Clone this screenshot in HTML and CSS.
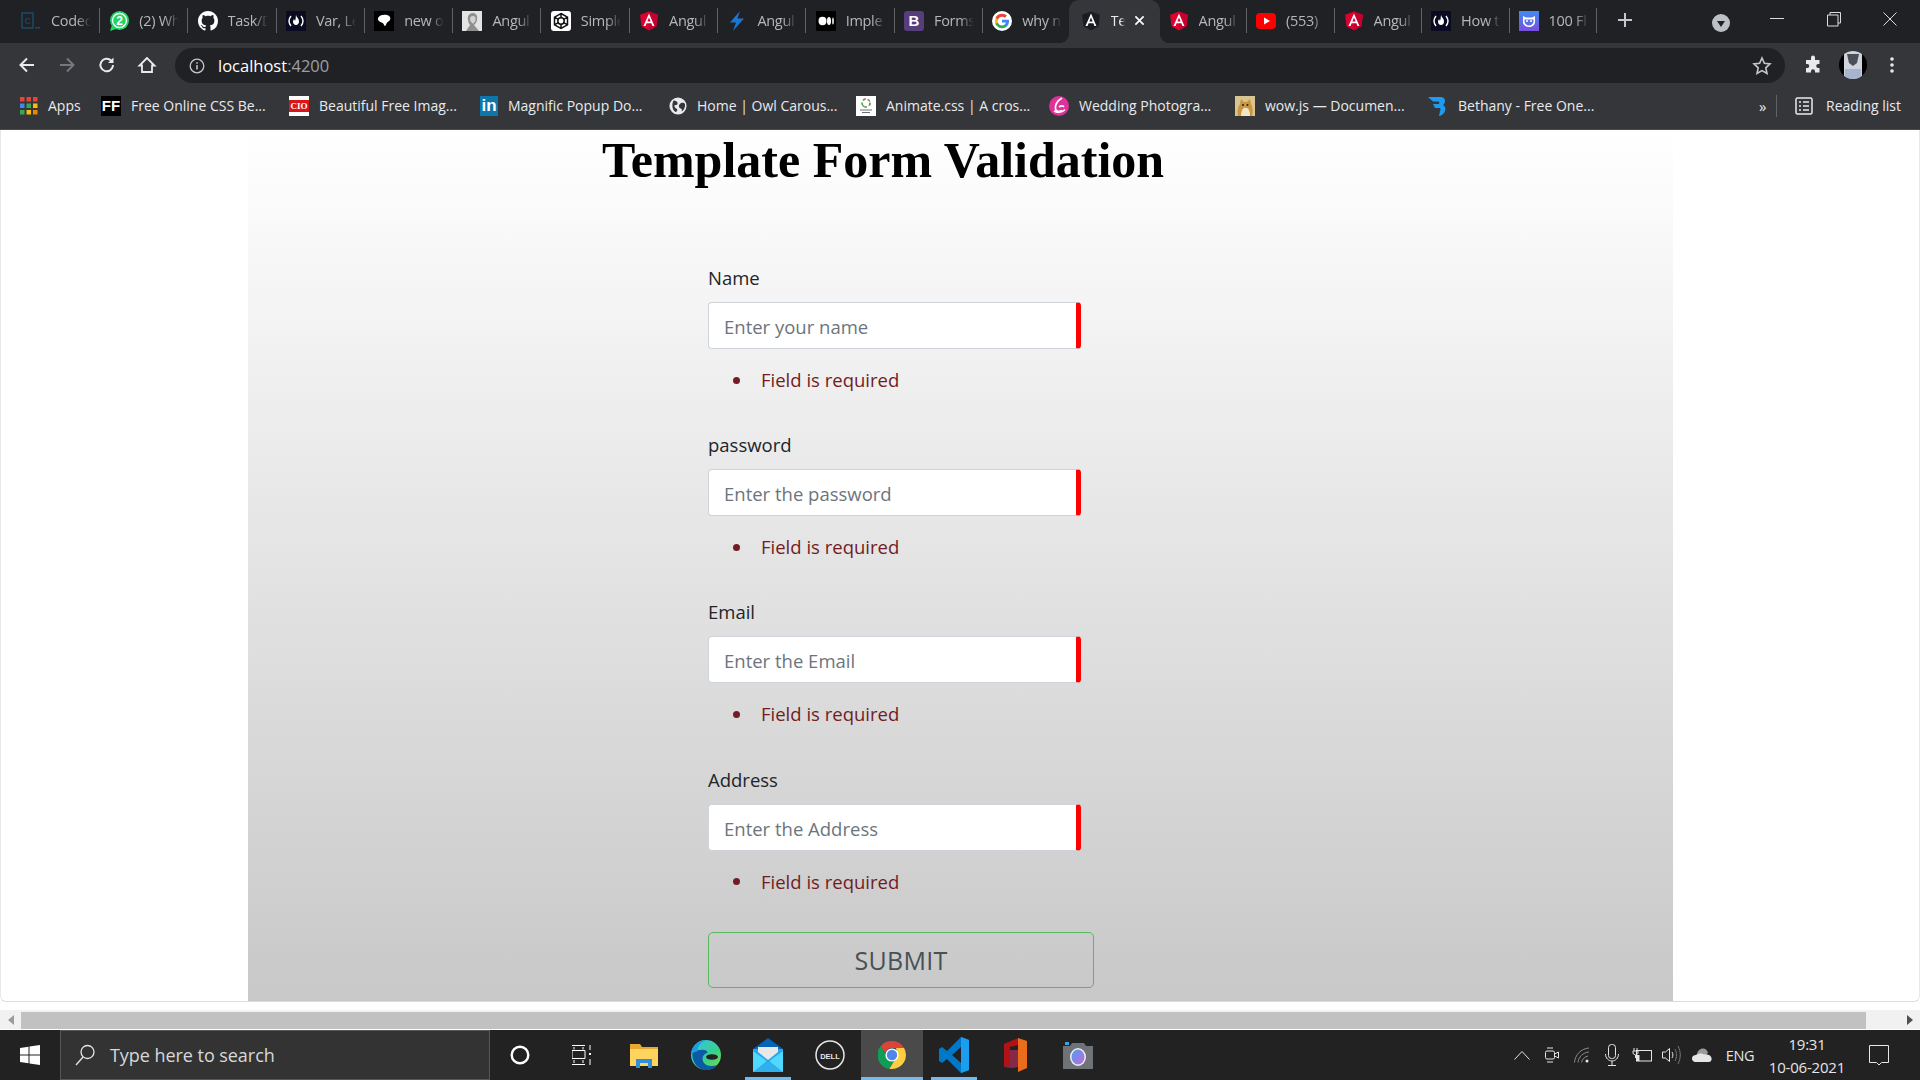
FILE: index.html
```html
<!DOCTYPE html>
<html lang="en">
<head>
<meta charset="utf-8">
<title>Template Form Validation</title>
<link rel="stylesheet" href="styles.css">
</head>
<body>
<svg class="defs" width="0" height="0" aria-hidden="true">
  <symbol id="ng-red" viewBox="20 25 210 210"><path fill="#DD0031" d="M125 30 31.9 63.2l14.2 123.1L125 230l78.9-43.7 14.2-123.1z"/><path fill="#C3002F" d="M125 30v200l78.9-43.7 14.2-123.1z"/><path fill="#fff" d="M125 52.1 66.8 182.6h21.7l11.7-29.2h49.4l11.7 29.2H182L125 52.1zm17 83.3h-34l17-40.9 17 40.9z"/></symbol>
  <symbol id="ng-dark" viewBox="20 25 210 210"><path fill="#1a1c24" d="M125 30 31.9 63.2l14.2 123.1L125 230l78.9-43.7 14.2-123.1z"/><path fill="#fff" d="M125 52.1 66.8 182.6h21.7l11.7-29.2h49.4l11.7 29.2H182L125 52.1zm17 83.3h-34l17-40.9 17 40.9z"/></symbol>
  <symbol id="fcc" viewBox="0 0 20 20"><rect width="20" height="20" fill="#0a0a23"/><path d="M5 5C2.6 8 2.6 12 5 15M15 5c2.400 3 2.400 7 0 10" fill="none" stroke="#fff" stroke-width="1.400"/><path fill="#fff" d="M10 4c.6 2.500 3 3.600 3 6.400 0 2-1.200 3.600-3 3.600s-3-1.500-3-3.300c0-1.300.7-2 1.200-2.700 0 1 .4 1.500.9 1.500.8-1.500.5-3.500.9-5.500z"/></symbol>
</svg>

<header class="tabstrip">
  <div class="tab"><svg class="fav" viewBox="0 0 20 20"><rect x="1" y="2" width="11" height="15" fill="none" stroke="#1d4a66" stroke-width="1.500"/><text x="3.500" y="13" class="fav-c">c</text><rect x="14" y="16" width="5" height="1.500" fill="#1d4a66"/></svg><span class="title">Codec</span><i class="sep"></i></div>
  <div class="tab"><svg class="fav" viewBox="0 0 20 20"><circle cx="10.500" cy="9.500" r="9.500" fill="#25d366"/><path d="M1 20l2-6 4 4z" fill="#25d366"/><circle cx="10.500" cy="9.500" r="7" fill="none" stroke="#fff" stroke-width="1.300"/><text x="10.500" y="14" class="fav-2">2</text></svg><span class="title">(2) Wh</span><i class="sep"></i></div>
  <div class="tab"><svg class="fav" viewBox="0 0 16 16"><path fill="#fff" d="M8 0C3.580 0 0 3.580 0 8c0 3.540 2.290 6.530 5.470 7.590.4.070.55-.17.55-.38 0-.19-.01-.82-.01-1.490-2.010.37-2.530-.49-2.690-.94-.09-.23-.48-.94-.82-1.130-.28-.15-.68-.52-.01-.53.63-.01 1.080.58 1.230.82.72 1.210 1.870.87 2.330.66.070-.52.28-.87.51-1.070-1.780-.2-3.640-.89-3.640-3.950 0-.87.31-1.590.82-2.150-.08-.2-.36-1.020.08-2.120 0 0 .67-.21 2.200.82.64-.18 1.320-.27 2-.27.68 0 1.360.09 2 .27 1.530-1.040 2.200-.82 2.200-.82.44 1.100.16 1.920.08 2.120.51.56.82 1.270.82 2.150 0 3.070-1.870 3.750-3.650 3.950.29.25.54.73.54 1.480 0 1.070-.01 1.930-.01 2.200 0 .21.15.46.55.38A8.013 8.013 0 0016 8c0-4.420-3.580-8-8-8z"/></svg><span class="title">Task/D</span><i class="sep"></i></div>
  <div class="tab"><svg class="fav"><use href="#fcc"/></svg><span class="title">Var, Le</span><i class="sep"></i></div>
  <div class="tab"><svg class="fav" viewBox="0 0 20 20"><rect width="20" height="20" fill="#000"/><path fill="#fff" d="M4 7c1-3 6-4 9-3 3 .6 4 3 3 5-1 1.500-3 2-3.500 3.500-.4 1.500-1 2.500-2 2.500-.5-1.500-1-3-3-3.500C5 11 3.500 9 4 7z"/></svg><span class="title">new o</span><i class="sep"></i></div>
  <div class="tab"><svg class="fav" viewBox="0 0 20 20"><rect width="20" height="20" fill="#e4e4e4"/><path fill="#8f8f8f" d="M6 9c-1-5 2-7 5-7s5 3 4 7c-.5 2-1.500 4-3 5l5 6H4l4-6C7 13 6.300 11 6 9z"/><path fill="#d2d2d2" d="M8 8c0-2 1-3 3-3s3 2 2.500 4-1.500 3.500-2.500 3.500S8 10 8 8z"/></svg><span class="title">Angul</span><i class="sep"></i></div>
  <div class="tab"><svg class="fav" viewBox="0 0 20 20"><rect width="20" height="20" rx="3" fill="#fff"/><path d="M10 2.500 16.500 6.200v7.600L10 17.500 3.500 13.800V6.200zM10 2.500v15M3.500 6.200l13 7.600M16.500 6.200l-13 7.600" fill="none" stroke="#111" stroke-width="1.500"/><circle cx="10" cy="10" r="3.200" fill="#fff" stroke="#111" stroke-width="1.500"/></svg><span class="title">Simple</span><i class="sep"></i></div>
  <div class="tab"><svg class="fav"><use href="#ng-red"/></svg><span class="title">Angul</span><i class="sep"></i></div>
  <div class="tab"><svg class="fav" viewBox="0 0 20 20"><path fill="#1976d2" d="M13 0 3 11.500h6L6 20l11-12.500h-6.500z"/></svg><span class="title">Angul</span><i class="sep"></i></div>
  <div class="tab"><svg class="fav" viewBox="0 0 20 20"><rect width="20" height="20" fill="#000" rx="1"/><ellipse cx="6.500" cy="10" rx="4" ry="4.200" fill="#fff"/><ellipse cx="13" cy="10" rx="2" ry="4" fill="#fff"/><ellipse cx="17" cy="10" rx=".8" ry="3.600" fill="#fff"/></svg><span class="title">Imple</span><i class="sep"></i></div>
  <div class="tab"><span class="fav-box fav-b">B</span><span class="title">Forms</span><i class="sep"></i></div>
  <div class="tab"><svg class="fav" viewBox="0 0 20 20"><circle cx="10" cy="10" r="10" fill="#fff"/><path fill="#4285f4" d="M17 10.200c0-.5 0-1-.1-1.400H10v2.700h3.900c-.2.9-.7 1.700-1.500 2.200v1.800h2.400C16.200 14.200 17 12.400 17 10.200z"/><path fill="#34a853" d="M10 17.200c2 0 3.600-.7 4.800-1.700l-2.400-1.800c-.6.400-1.400.7-2.400.7-1.900 0-3.500-1.300-4.100-3H3.500v1.900C4.700 15.700 7.200 17.200 10 17.200z"/><path fill="#fbbc05" d="M5.900 12.300c-.3-.9-.3-1.800 0-2.700V7.700H3.500c-.8 1.600-.8 3.500 0 5.100z" transform="translate(0 -.2)"/><path fill="#ea4335" d="M10 5.700c1.100 0 2 .4 2.800 1.100l2.100-2.100C13.600 3.500 11.900 2.800 10 2.800c-2.800 0-5.300 1.600-6.500 4l2.400 1.900c.6-1.700 2.200-3 4.100-3z"/></svg><span class="title">why n</span></div>
  <div class="tab active"><svg class="fav"><use href="#ng-dark"/></svg><span class="title">Te</span><svg class="close" viewBox="0 0 12 12"><path d="M1.500 1.500l9 9M10.500 1.500l-9 9" stroke="#fff" stroke-width="1.800"/></svg></div>
  <div class="tab"><svg class="fav"><use href="#ng-red"/></svg><span class="title">Angul</span><i class="sep"></i></div>
  <div class="tab"><svg class="fav" viewBox="0 0 20 20"><rect y="2" width="20" height="16" rx="4" fill="#f00"/><path fill="#fff" d="M8 6.500v7l6-3.500z"/></svg><span class="title">(553)</span><i class="sep"></i></div>
  <div class="tab"><svg class="fav"><use href="#ng-red"/></svg><span class="title">Angul</span><i class="sep"></i></div>
  <div class="tab"><svg class="fav"><use href="#fcc"/></svg><span class="title">How t</span><i class="sep"></i></div>
  <div class="tab"><svg class="fav" viewBox="0 0 20 20"><defs><linearGradient id="pur" x1="0" y1="0" x2="0" y2="1"><stop offset="0" stop-color="#3f8cf0"/><stop offset="1" stop-color="#7a4fe0"/></linearGradient></defs><rect width="20" height="20" fill="url(#pur)"/><path d="M4 5l3 1.500h6L16 5v6c0 3-3 5-6 5s-6-2-6-5z" fill="#fff"/><path d="M5.500 8.500h9v2c0 2-2 4-4.500 4s-4.500-2-4.500-4z" fill="#5a6fe8"/><circle cx="8" cy="10" r="1" fill="#fff"/><circle cx="12" cy="10" r="1" fill="#fff"/></svg><span class="title">100 Fl</span><i class="sep"></i></div>
  <button class="newtab" aria-label="New tab"><svg width="16" height="16" viewBox="0 0 16 16"><path d="M8 1v14M1 8h14" stroke="#c4c7cc" stroke-width="2"/></svg></button>
  <div class="tabsearch"><svg width="18" height="18" viewBox="0 0 18 18"><circle cx="9" cy="9" r="9" fill="#bdc1c6"/><path d="M5 7h8l-4 6z" fill="#202124"/></svg></div>
  <div class="winbtn"><svg width="14" height="14" viewBox="0 0 14 14"><path d="M0 6.500h14" stroke="#dcdcdc"/></svg></div>
  <div class="winbtn"><svg width="14" height="16" viewBox="0 0 14 16"><path d="M.5 4h10.500v11H.5zM3 4V1.500h10.500V12H11" fill="none" stroke="#dcdcdc"/></svg></div>
  <div class="winbtn"><svg width="14" height="14" viewBox="0 0 14 14"><path d="M.5.500l13 13M13.500.500l-13 13" stroke="#dcdcdc"/></svg></div>
</header>

<nav class="toolbar">
  <svg class="tool tool-first" viewBox="0 0 20 20"><path d="M17 10H4M10 3.500 3.500 10l6.500 6.500" fill="none" stroke="#e8eaed" stroke-width="2"/></svg>
  <svg class="tool" viewBox="0 0 20 20"><path d="M3 10h13M10 3.500l6.500 6.500-6.500 6.500" fill="none" stroke="#75787d" stroke-width="2"/></svg>
  <svg class="tool" viewBox="0 0 20 20"><path d="M16 10a6.300 6.300 0 1 1-1.900-4.500" fill="none" stroke="#e8eaed" stroke-width="2"/><path d="M16.500 2.500v5.500H11z" fill="#e8eaed"/></svg>
  <svg class="tool" viewBox="0 0 20 20"><path d="M10 3 2.500 10.500H5V17h10v-6.500h2.500zM8 17v0" fill="none" stroke="#e8eaed" stroke-width="1.800"/></svg>
  <div class="omnibox">
    <svg class="info" viewBox="0 0 16 16"><circle cx="8" cy="8" r="6.800" fill="none" stroke="#c4c7cc" stroke-width="1.300"/><path d="M8 7v4.500M8 4.200v1.500" stroke="#c4c7cc" stroke-width="1.500"/></svg>
    <span class="url">localhost<span class="port">:4200</span></span>
    <svg class="star" viewBox="0 0 20 20"><path d="M10 2l2.400 5.300 5.600.6-4.200 3.900 1.200 5.700-5-2.900-5 2.900 1.200-5.700L2 7.900l5.600-.6z" fill="none" stroke="#c4c7cc" stroke-width="1.600"/></svg>
  </div>
  <svg class="puzzle" viewBox="0 0 20 20"><path fill="#e8eaed" d="M8 2.500a2 2 0 0 1 4 0V5h4.500v4h-1.300a2 2 0 0 0 0 4h1.300v4.500H12v-1.300a2 2 0 0 0-4 0v1.300H3V13h1.300a2 2 0 0 0 0-4H3V5h5z"/></svg>
  <svg class="avatar" viewBox="0 0 28 28"><defs><clipPath id="ava"><ellipse cx="14" cy="14" rx="14" ry="14"/></clipPath></defs><g clip-path="url(#ava)"><rect width="28" height="28" fill="#000"/><rect x="5" width="18" height="28" fill="#cfd4dc"/><path d="M8 3h12l-2 9-4 3-4-3z" fill="#4a4f58"/><rect x="6" y="18" width="16" height="10" fill="#a7b3cf"/></g></svg>
  <svg class="dots" viewBox="0 0 4 16"><circle cx="2" cy="2" r="1.800" fill="#e8eaed"/><circle cx="2" cy="8" r="1.800" fill="#e8eaed"/><circle cx="2" cy="14" r="1.800" fill="#e8eaed"/></svg>
</nav>

<nav class="bookmarks">
  <a class="bm bm-apps"><svg class="bmi" viewBox="0 0 18 18"><g fill="#ea4335"><rect width="4.500" height="4.500"/><rect x="6.500" width="4.500" height="4.500"/><rect x="13" width="4.500" height="4.500"/></g><rect y="6.500" width="4.500" height="4.500" fill="#4285f4"/><rect x="6.500" y="6.500" width="4.500" height="4.500" fill="#34a853"/><rect x="13" y="6.500" width="4.500" height="4.500" fill="#fbbc04"/><rect y="13" width="4.500" height="4.500" fill="#34a853"/><rect x="6.500" y="13" width="4.500" height="4.500" fill="#fbbc04"/><rect x="13" y="13" width="4.500" height="4.500" fill="#ea8600"/></svg><span>Apps</span></a>
  <a class="bm bm-ff"><span class="fav-box fav-ff">FF</span><span>Free Online CSS Be...</span></a>
  <a class="bm bm-cio"><span class="fav-box fav-cio">CIO</span><span>Beautiful Free Imag...</span></a>
  <a class="bm bm-in"><span class="fav-box fav-in">in</span><span>Magnific Popup Do...</span></a>
  <a class="bm bm-owl"><svg class="fav fav-18" viewBox="0 0 20 20"><circle cx="10" cy="10" r="9.500" fill="#e8eaed"/><path fill="#35363a" d="M5 4c2 0 5 1 4.500 3.500S6 8 6 10s2 2.500 3 3.500-1 3.500-2 3C4 15 2.500 9 5 4zM13 7c2-1 4-.5 4.800 1 .5 3-1 6.500-3.800 8 1-2 0-3-1.500-3.500S10 9 13 7z"/></svg><span>Home | Owl Carous...</span></a>
  <a class="bm bm-ani"><svg class="fav" viewBox="0 0 20 20"><rect width="20" height="20" fill="#fff"/><circle cx="10" cy="7" r="4" fill="none" stroke="#39a84a" stroke-width="1.500" stroke-dasharray="3 2"/><circle cx="10" cy="7" r="4" fill="none" stroke="#e5568d" stroke-width="1.500" stroke-dasharray="2 6"/><path d="M4 14h12M6 16.500h8" stroke="#6a6f76"/></svg><span>Animate.css | A cros...</span></a>
  <a class="bm bm-wed"><svg class="fav" viewBox="0 0 20 20"><circle cx="10" cy="10" r="10" fill="#e0309a"/><path d="M13 2C8 5 6 9 6.500 13c.4 2.500 4 3 6.500 1.500M5 15c3 2 8 2 11-1.500M10 11c2-1.500 4-1.500 5 0" fill="none" stroke="#fff" stroke-width="1.600"/></svg><span>Wedding Photogra...</span></a>
  <a class="bm bm-wow"><svg class="fav" viewBox="0 0 20 20"><rect width="20" height="20" fill="#d9c48f"/><path fill="#c9953f" d="M3 20c-1-6 0-9 2-12l1-5 3 3h3l3-3 1 5c2 3 2 8 1 12z"/><path fill="#f1e5c8" d="M6 20c0-4 1-7 3-8 2-.5 4 0 5 2 1 2 1 4 1 6z"/><circle cx="8" cy="9" r="1" fill="#222"/><circle cx="12.500" cy="9" r="1" fill="#222"/></svg><span>wow.js — Documen...</span></a>
  <a class="bm bm-bet"><svg class="fav" viewBox="0 0 20 20"><path fill="#1e9bf0" d="M0 1h13c4 0 5 4 3 7-1 1-1 1-1 1 3 2 3 5 1 8-1 1.500-3 3-5 3l1-5c1-1 .5-2.500-.5-3H7L5 8h5c1.500 0 2-2 .5-2.500H5z"/></svg><span>Bethany - Free One...</span></a>
  <span class="more">»</span>
  <i class="bm-sep"></i>
  <a class="bm bm-read"><svg class="fav" viewBox="0 0 20 20"><rect x="2" y="2" width="16" height="16" rx="1.500" fill="none" stroke="#e8eaed" stroke-width="1.500"/><path d="M5 6h2M9 6h6M5 10h2M9 10h6M5 14h2M9 14h6" stroke="#e8eaed" stroke-width="1.500"/></svg><span>Reading list</span></a>
</nav>

<main class="page">
  <section class="panel">
    <h1 class="heading">Template Form Validation</h1>
    <form class="form">
      <div class="field">
        <label class="label">Name</label>
        <div class="control"><input class="input" type="text" placeholder="Enter your name"></div>
        <ul class="errors"><li>Field is required</li></ul>
      </div>
      <div class="field">
        <label class="label">password</label>
        <div class="control"><input class="input" type="text" placeholder="Enter the password"></div>
        <ul class="errors"><li>Field is required</li></ul>
      </div>
      <div class="field">
        <label class="label">Email</label>
        <div class="control"><input class="input" type="text" placeholder="Enter the Email"></div>
        <ul class="errors"><li>Field is required</li></ul>
      </div>
      <div class="field">
        <label class="label">Address</label>
        <div class="control"><input class="input" type="text" placeholder="Enter the Address"></div>
        <ul class="errors"><li>Field is required</li></ul>
      </div>
      <button class="submit" type="button">SUBMIT</button>
    </form>
  </section>
</main>

<div class="hscroll">
  <span class="arrow arrow-l"></span>
  <div class="thumb"></div>
  <span class="arrow arrow-r"></span>
</div>

<footer class="taskbar">
  <div class="start"><svg width="20" height="20" viewBox="0 0 20 20"><path fill="#fff" d="M0 3l8.500-1.200V9.500H0zM9.500 1.600 20 0v9.500H9.500zM0 10.500h8.500v7.700L0 17zM9.500 10.500H20V20L9.500 18.400z"/></svg></div>
  <div class="search"><svg width="20" height="22" viewBox="0 0 20 22"><circle cx="12.500" cy="8" r="6.500" fill="none" stroke="#e6e6e6" stroke-width="1.300"/><path d="M8 13 1 21" stroke="#e6e6e6" stroke-width="1.300"/></svg><span>Type here to search</span></div>
  <div class="tb"><svg width="20" height="20" viewBox="0 0 20 20"><circle cx="10" cy="10" r="8.300" fill="none" stroke="#fff" stroke-width="2.400"/></svg></div>
  <div class="tb"><svg width="20" height="20" viewBox="0 0 20 20"><path d="M0 .5h13M2 2v2.500M11 2v2.500M0 5.500h13v8H0zM0 19.500h13M2 15v3M11 15v3" fill="none" stroke="#fff" stroke-width="1"/><rect x="17" y="8" width="2" height="2" fill="#fff"/><path d="M18 0v5M18 14v6" stroke="#fff"/></svg></div>
  <div class="tb"><svg width="28" height="26" viewBox="0 0 28 26"><path fill="#e8a92c" d="M0 2h10l2 3h16v19H0z"/><path fill="#ffd45e" d="M0 7h28v17H0z"/><path fill="#2f8fd8" d="M6 17h16v9h-4v-5h-8v5H6z"/></svg></div>
  <div class="tb"><svg width="30" height="30" viewBox="0 0 30 30"><defs><linearGradient id="eg" x1="0" y1="0" x2="1" y2="1"><stop offset="0" stop-color="#35c1f1"/><stop offset=".6" stop-color="#3ad08a"/><stop offset="1" stop-color="#7fdc3e"/></linearGradient></defs><circle cx="15" cy="15" r="15" fill="url(#eg)"/><path fill="#0c59a4" d="M2 9C0 16 2 26 12 30c6 1 11-1 14-5-5 2-11 1-13-2-3-4-1-9 3-10 2-2-3-4-6-3C6 10 3 12 2 9z"/><path fill="#1b9de2" d="M0 14C1 5 8 0 15 0 8 3 6 8 7 11 4 12 1 13 0 14z"/><ellipse cx="21" cy="17" rx="6" ry="2.800" fill="#232323"/></svg></div>
  <div class="tb on"><svg width="30" height="34" viewBox="0 0 30 34"><path fill="#0364b8" d="M15 0 30 11v4H0v-4z"/><rect y="11" width="30" height="23" fill="#28a8ea"/><path fill="#e8e8e8" d="M5 9h20v5l-10 8-10-8z"/><path fill="#50d9ff" d="M0 13l15 11 15-11v21H0z"/><path fill="#0f88d8" d="M0 34 15 22l15 12z" opacity=".5"/></svg></div>
  <div class="tb"><svg width="30" height="30" viewBox="0 0 30 30"><circle cx="15" cy="15" r="14" fill="none" stroke="#e6e6e6" stroke-width="1.500"/><text x="15" y="18.500" class="dell">DELL</text></svg></div>
  <div class="tb on current"><svg width="28" height="28" viewBox="0 0 28 28"><path fill="#db4437" d="M14 0a14 14 0 0 1 12.100 7H14a7 7 0 0 0-6.800 5.200L2.800 5A14 14 0 0 1 14 0z"/><path fill="#0f9d58" d="M2.800 5l6 10.400a5.800 5.800 0 0 0 6.800 5.300L11.400 28A14 14 0 0 1 2.800 5z"/><path fill="#ffcd40" d="M26.100 7A14 14 0 0 1 14 28h-2.600l4.200-7.300a7 7 0 0 0 3.400-9.900L18 7z"/><circle cx="14" cy="14" r="6.600" fill="#fff"/><circle cx="14" cy="14" r="5.200" fill="#4f86ec"/></svg></div>
  <div class="tb on"><svg width="30" height="36" viewBox="0 0 30 36"><path fill="#0078c8" d="M22 0 8 14 3 10 0 12v12l3 2 5-4 14 14 8-3V3zM22 10v16l-9-8z"/><path fill="#1b9ef0" d="M22 0l8 3v30l-8 3z"/></svg></div>
  <div class="tb"><svg width="24" height="34" viewBox="0 0 24 34"><path fill="#eb6c1b" d="M14 0l9 3v27l-9 4z"/><path fill="#b01218" d="M14 0 0 6v23l6-2V9l8-2z"/><path fill="#d73064" d="M6 12v15l-6 2 8 1 6-1V12z" opacity=".55"/></svg></div>
  <div class="tb"><svg width="30" height="28" viewBox="0 0 30 28"><path fill="#6e7378" d="M9 2h12l2 3h7v23H0V5h7z"/><rect x="2" y="1" width="4" height="3" fill="#3aa3e0"/><ellipse cx="15" cy="16" rx="8" ry="9" fill="#eee"/><defs><linearGradient id="cg" x1="0" y1="0" x2="1" y2="1"><stop offset="0" stop-color="#4d9ef0"/><stop offset="1" stop-color="#c56adb"/></linearGradient></defs><ellipse cx="15" cy="16" rx="6.500" ry="7.500" fill="url(#cg)"/></svg></div>

  <div class="tray">
    <div class="tri"><svg width="16" height="10" viewBox="0 0 16 10"><path d="M.5 9.500 8 1.500l7.500 8" fill="none" stroke="#e6e6e6"/></svg></div>
    <div class="tri"><svg width="14" height="18" viewBox="0 0 14 18"><rect x=".5" y="5" width="9" height="8" rx="1.500" fill="none" stroke="#e6e6e6"/><path d="M9.500 8l4-2v6l-4-2M2 2h6M2 16h6" fill="none" stroke="#e6e6e6"/></svg></div>
    <div class="tri"><svg width="16" height="16" viewBox="0 0 16 16"><path d="M.5 15.500C1 8 7 1.500 15 1M4 15.500C4.500 10 9 5.500 15 5M7.500 15.500C8 12 11 9.500 14 9" fill="none" stroke="#8a8a8a"/><circle cx="13" cy="14" r="1.500" fill="#e6e6e6"/></svg></div>
    <div class="tri"><svg width="14" height="22" viewBox="0 0 14 22"><rect x="3.500" y=".5" width="7" height="14" rx="3" fill="none" stroke="#e6e6e6"/><path d="M.5 10c0 4 3 7 6.500 7s6.500-3 6.500-7M7 17v4M3 21.500h8" fill="none" stroke="#e6e6e6"/></svg></div>
    <div class="tri"><svg width="20" height="14" viewBox="0 0 20 14"><rect x="4.500" y="2.500" width="15" height="10.500" fill="none" stroke="#e6e6e6"/><rect x="4.500" y="7" width="3" height="6" fill="#e6e6e6"/><path d="M2 0v3M5 0v3M1 3h5v2.500L3.500 7 1 5.500zM3.500 7v3" fill="none" stroke="#e6e6e6"/></svg></div>
    <div class="tri"><svg width="20" height="20" viewBox="0 0 20 20"><path d="M.5 7h3l4-3.500v13l-4-3.500h-3zM10 7c1.200 2 1.200 4 0 6" fill="none" stroke="#e6e6e6"/><path d="M13 4c2 4 2 8 0 12M16 1c3 6 3 12 0 18" fill="none" stroke="#777"/></svg></div>
    <div class="tri"><svg width="20" height="14" viewBox="0 0 20 14"><path fill="#9a9a9a" d="M5 7c0-4 3-6.500 6-6.500 2.500 0 4.500 2 5 4.500l-5 4z"/><path fill="#e6e6e6" d="M3.500 14C1 14 0 12 0 10.500 0 8.500 1.500 7 4 7c2-1.500 6-2 8-.5 1-.5 7 0 7.500 3.500.5 2-.5 4-3 4z"/></svg></div>
    <span class="lang">ENG</span>
    <div class="clock"><span>19:31</span><span>10-06-2021</span></div>
    <div class="notif"><svg width="20" height="21" viewBox="0 0 20 21"><path d="M.5.500h19v17h-7l-2.500 2.500L7.500 17.500h-7z" fill="none" stroke="#e6e6e6"/></svg></div>
  </div>
</footer>
</body>
</html>
```
FILE: styles.css
```css
* { box-sizing: border-box; }
html, body { margin: 0; height: 100%; }
body {
  width: 1920px;
  height: 1080px;
  overflow: hidden;
  display: flex;
  flex-direction: column;
  background: #fff;
  font-family: "Open Sans", "Noto Sans", sans-serif;
}
.defs { display: block; height: 0; }

/* tab strip */
.tabstrip {
  flex: 0 0 43px;
  display: flex;
  align-items: stretch;
  padding-left: 12px;
  background: #202124;
}
.tab {
  flex: 0 0 88.300px;
  position: relative;
  display: flex;
  align-items: center;
  gap: 10px;
  padding-left: 9px;
  padding-bottom: 2px;
  font-size: 14.500px;
  letter-spacing: -.3px;
  color: #b4b7bb;
}
.fav { flex: 0 0 20px; width: 20px; height: 20px; }
.fav-18 { flex: 0 0 18px; width: 18px; height: 18px; }
.title {
  flex: 0 0 40px;
  overflow: hidden;
  white-space: nowrap;
  -webkit-mask-image: linear-gradient(to right, #000 65%, transparent 100%);
  mask-image: linear-gradient(to right, #000 65%, transparent 100%);
}
.sep { flex: 0 0 1px; height: 25px; margin-left: -2px; background: #5f6368; }
.tab.active ~ .tab { flex: 0 0 87.500px; }
.tab.active ~ .tab .sep { margin-left: -2.500px; }
.tab.active {
  margin-left: -3px;
  flex: 0 0 91px;
  padding-left: 12px;
  background: #35363a;
  border-radius: 10px 10px 0 0;
  color: #e8eaed;
}
.tab.active .title {
  flex: 0 0 14px;
  -webkit-mask-image: linear-gradient(to right, #000 70%, transparent 100%);
  mask-image: linear-gradient(to right, #000 70%, transparent 100%);
}
.tab.active::before, .tab.active::after {
  content: "";
  position: absolute;
  bottom: 0;
  width: 10px;
  height: 10px;
}
.tab.active::before { left: -10px; background: radial-gradient(circle at 0 0, transparent 10px, #35363a 10.5px); }
.tab.active::after { right: -10px; background: radial-gradient(circle at 100% 0, transparent 10px, #35363a 10.5px); }
.close { width: 11px; height: 11px; margin-left: -1px; }
.fav-box {
  flex: 0 0 20px;
  width: 20px;
  height: 20px;
  display: flex;
  align-items: center;
  justify-content: center;
  letter-spacing: 0;
}
.fav-b { background: #563d7c; border-radius: 3px; color: #fff; font: 700 15px "Liberation Sans", sans-serif; }
.fav-c { font: 400 11px "Liberation Mono", monospace; fill: #1d4a66; }
.fav-2 { font: 700 12px "Liberation Sans", sans-serif; fill: #fff; text-anchor: middle; }
.newtab { flex: 0 0 55px; background: none; border: 0; padding: 0 0 4px; display: flex; align-items: center; justify-content: center; }
.tabsearch { margin-left: auto; margin-right: 19px; display: flex; align-items: center; padding-top: 2px; }
.winbtn { flex: 0 0 56.500px; display: flex; align-items: center; justify-content: center; padding-bottom: 6px; }
.winbtn:last-child { margin-right: 1.500px; }

/* toolbar */
.toolbar {
  flex: 0 0 45px;
  display: flex;
  align-items: flex-start;
  padding-top: 5px;
  background: #35363a;
}
.tool { flex: 0 0 20px; width: 20px; height: 20px; margin: 7px 20px 0 0; }
.tool-first { margin-left: 17px; }
.omnibox {
  flex: 0 0 1610px;
  margin-left: -2px;
  height: 35px;
  display: flex;
  align-items: center;
  padding: 0 14px;
  border-radius: 18px;
  background: #202124;
}
.info { width: 16px; height: 16px; }
.url { margin-left: 13px; font-size: 16.500px; color: #fff; }
.port { color: #9aa0a6; }
.star { width: 20px; height: 20px; margin-left: auto; margin-right: -1px; }
.puzzle { width: 20px; height: 20px; margin: 7px 0 0 18px; }
.avatar { width: 28px; height: 28px; margin: 3px 0 0 16px; }
.dots { width: 4px; height: 16px; margin: 9px 0 0 23px; }

/* bookmarks */
.bookmarks {
  flex: 0 0 42px;
  display: flex;
  align-items: center;
  padding: 0 0 6px 20px;
  background: #35363a;
  border-bottom: 1px solid #4a4b4e;
  font-size: 14px;
  color: #e8eaed;
}
.bm { display: flex; align-items: center; gap: 10px; white-space: nowrap; }
.bm-apps { flex: 0 0 81px; gap: 10px; }
.bmi { width: 18px; height: 18px; }
.bm-ff { flex: 0 0 188px; }
.bm-in { flex: 0 0 189px; }
.bm-cio { flex: 0 0 191px; }
.bm-owl { flex: 0 0 187px; }
.bm-ani, .bm-wow { flex: 0 0 193px; }
.bm-wed { flex: 0 0 186px; }
.bm-bet { flex: 0 0 331px; }
.more { font-size: 15px; flex: 0 0 17px; }
.bm-sep { flex: 0 0 1px; height: 22px; margin-right: 17px; background: #5f6368; }
.bm-read { gap: 12px; }
.fav-ff { background: #000; color: #fff; font: 700 15px "Liberation Sans", sans-serif; }
.fav-cio { color: #fff; font: 700 9px "Liberation Serif", serif; background: linear-gradient(#fff 20%, #d9141b 20%, #d9141b 80%, #fff 80%); }
.fav-in { flex: 0 0 18px; width: 18px; background: #0e76a8; color: #fff; font: 700 17px "Liberation Sans", sans-serif; }

/* page */
.page {
  flex: 0 0 872px;
  border-bottom: 1px solid #dcdcdc;
  border-left: 1px solid #e8e8e8;
  border-right: 1px solid #e8e8e8;
  border-radius: 0 0 6px 6px;
  overflow: hidden;
}
.panel {
  width: 1425px;
  height: 871px;
  margin-left: 247px;
  overflow: hidden;
  background: linear-gradient(#fff, #c8c8c8);
}
.heading {
  margin: 0 0 0 354px;
  font: 700 50px/60px "Liberation Serif", serif;
  white-space: nowrap;
  color: #000;
}
.form { width: 386px; margin: 73px 0 0 460px; }
.field { margin-bottom: 35.200px; }
.label {
  display: block;
  height: 30px;
  margin-bottom: 9px;
  font-size: 18.500px;
  line-height: 30px;
  color: #212529;
}
.control { width: 373px; }
.input {
  display: block;
  width: 100%;
  height: 47px;
  padding: 2px 15px 0;
  border: 1px solid #ced4da;
  border-right: 5px solid #f00;
  border-radius: 4px;
  background: #fff;
  font: 400 18.500px "Open Sans", sans-serif;
  color: #495057;
  outline: 0;
}
.input::placeholder { color: #6c757d; opacity: 1; }
.errors {
  margin: 16px 0 0;
  padding-left: 25px;
  list-style: none;
  font-size: 18.500px;
  line-height: 30px;
  color: #721c24;
}
.errors li { display: flex; align-items: center; gap: 21px; }
.errors li::before { content: ""; flex: 0 0 7px; height: 7px; border-radius: 50%; background: #721c24; }
.submit {
  display: block;
  width: 386px;
  height: 56px;
  padding: 0;
  border: 1px solid #5cb85c;
  border-radius: 5px;
  background: transparent;
  font: 500 25px "Open Sans", sans-serif;
  letter-spacing: .3px;
  color: #495057;
}

/* horizontal scrollbar */
.hscroll {
  flex: 0 0 20px;
  margin-top: 8px;
  display: flex;
  align-items: center;
  background: #f1f1f1;
  border-bottom: 1px solid #fff;
}
.thumb { flex: 0 0 1845px; height: 17px; margin-top: 2px; background: #c1c1c1; }
.arrow { flex: 0 0 21px; display: flex; justify-content: center; }
.arrow-r { flex: 1; justify-content: flex-end; padding-right: 1px; }
.arrow::before { content: ""; border-style: solid; border-width: 5.500px 6px; border-color: transparent; }
.arrow-l::before { border-right-color: #9b9b9b; margin-right: 6px; }
.arrow-r::before { border-left-color: #505050; }

/* taskbar */
.taskbar {
  flex: 1;
  display: flex;
  align-items: stretch;
  background: #222;
  color: #fff;
}
.start { flex: 0 0 60px; display: flex; align-items: center; justify-content: center; }
.search {
  flex: 0 0 430px;
  margin-right: -1px;
  display: flex;
  align-items: center;
  gap: 15px;
  padding-left: 14px;
  background: #333;
  border: 1px solid #575757;
  font-size: 18px;
  letter-spacing: -.05px;
  color: #d8d8d8;
}
.tb {
  flex: 0 0 62px;
  display: flex;
  align-items: center;
  justify-content: center;
  border-bottom: 3px solid transparent;
  padding-top: 3px;
}
.tb.on { border-image: linear-gradient(to right, transparent 9px, #76b9ed 9px, #76b9ed 53px, transparent 53px) 1; }
.tb.current { background: #4a4a4a; border-image: linear-gradient(#76b9ed, #76b9ed) 1; }
.dell { font: 700 7.500px "Liberation Sans", sans-serif; fill: #e6e6e6; text-anchor: middle; }
.tray { margin-left: auto; display: flex; align-items: center; }
.tri { flex: 0 0 30px; display: flex; justify-content: center; }
.lang { flex: 0 0 46px; text-align: center; font-size: 14.500px; letter-spacing: -.3px; color: #e6e6e6; }
.clock {
  flex: 0 0 88px;
  display: flex;
  flex-direction: column;
  align-items: center;
  gap: 3px;
  font-size: 15px;
  line-height: 20px;
  letter-spacing: -.2px;
  color: #e6e6e6;
}
.notif { flex: 0 0 56px; margin-right: 13px; display: flex; justify-content: center; }
```
